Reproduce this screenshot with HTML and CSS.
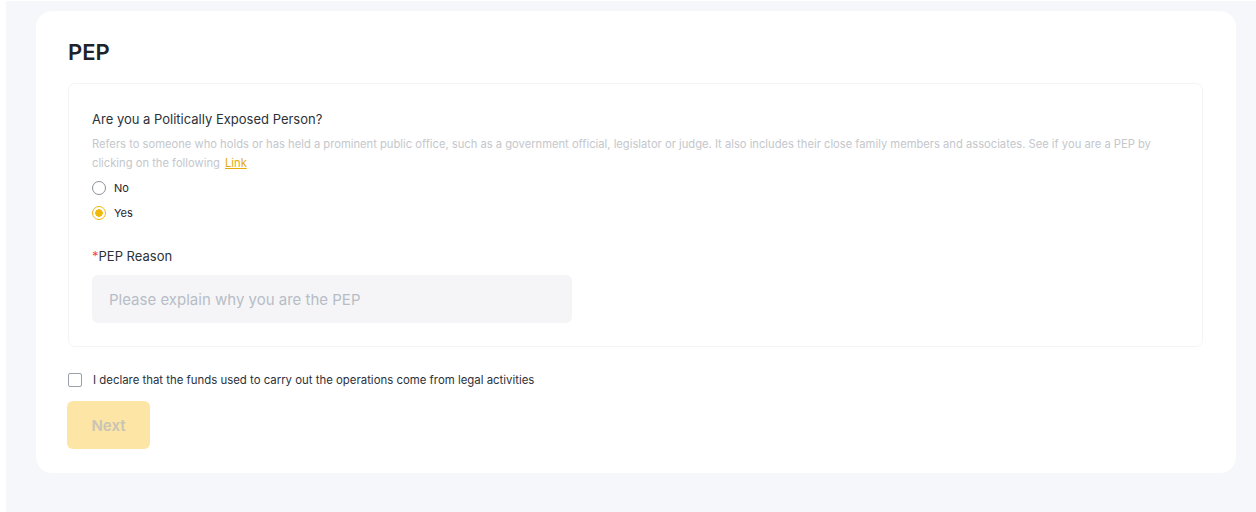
FILE: index.html
```html
<!DOCTYPE html>
<html lang="en">
  <head>
    <meta charset="UTF-8" />
    <meta name="viewport" content="width=device-width, initial-scale=1.0" />
    <title>PEP</title>
    <link rel="stylesheet" href="styles.css">
  </head>
  <body>
    <div class="page">
      <div class="card">
        <h1 class="title">PEP</h1>
        <div class="box">
          <div class="question">Are you a Politically Exposed Person?</div>
          <p class="desc">
            Refers to someone who holds or has held a prominent public office, such as a government official, legislator or judge. It also includes their close family members and associates. See if you are a PEP by clicking on the following <a class="link" href="#">Link</a>
          </p>
          <label class="radio">
            <span class="dot"></span>
            <span>No</span>
          </label>
          <label class="radio">
            <span class="dot checked"></span>
            <span>Yes</span>
          </label>
          <div class="field-label"><span class="star">*</span>PEP Reason</div>
          <div class="input">Please explain why you are the PEP</div>
        </div>
        <label class="declare">
          <span class="check"></span>
          <span>I declare that the funds used to carry out the operations come from legal activities</span>
        </label>
        <button class="next">Next</button>
      </div>
    </div>
  </body>
</html>
```

FILE: styles.css
```css
html {
  height: 100%;
}
body {
  margin: 0;
  height: 100%;
  background-color: #ffffff;
  font-family: Inter, "Noto Sans", sans-serif;
  color: #1e2329;
}
.page {
  margin: 1px 0 0 6px;
  height: 511px;
  padding-top: 10px;
  box-sizing: border-box;
  background-color: #f6f7fa;
}
.card {
  margin-left: 30px;
  width: 1200px;
  height: 462px;
  box-sizing: border-box;
  padding: 29px 0 0 32px;
  border-radius: 16px;
  background-color: #ffffff;
}
.title {
  margin: 0;
  font-size: 22px;
  line-height: 24px;
  font-weight: 600;
}
.box {
  margin-top: 19px;
  width: 1135px;
  height: 264px;
  box-sizing: border-box;
  padding: 27px 23px 0 23px;
  border: 1px solid #f3f4f6;
  border-radius: 7px;
}
.question {
  font-size: 13px;
  line-height: 16px;
  color: #2b3139;
}
.desc {
  margin: 8px 0 0 0;
  max-width: 1082px;
  font-size: 11.2px;
  line-height: 19px;
  color: #c4c7cc;
}
.link {
  display: inline-block;
  line-height: 15px;
  color: #e8a90b;
  margin-left: 2px;
}
.radio {
  display: flex;
  align-items: center;
  gap: 8px;
  height: 25px;
  font-size: 11px;
  color: #1e2329;
}
.radio:first-of-type {
  margin-top: 2px;
}
.dot {
  width: 12px;
  height: 12px;
  border: 1px solid #8a9099;
  border-radius: 50%;
  box-sizing: content-box;
}
.dot.checked {
  border-color: #f0b90b;
  background: radial-gradient(circle, #f0b90b 0 3.5px, #ffffff 4px);
}
.field-label {
  margin-top: 23px;
  font-size: 13px;
  line-height: 16px;
  color: #2b3139;
}
.star {
  color: #f6465d;
}
.input {
  margin-top: 11px;
  width: 480px;
  height: 48px;
  box-sizing: border-box;
  padding-left: 17px;
  display: flex;
  align-items: center;
  border-radius: 6px;
  background-color: #f5f5f7;
  font-size: 15px;
  color: #b7bdc6;
}
.declare {
  margin-top: 26px;
  display: flex;
  align-items: center;
  gap: 11px;
  font-size: 11.4px;
  color: #2b3139;
}
.check {
  width: 12px;
  height: 12px;
  border: 1px solid #9aa0a8;
  border-radius: 2px;
}
.next {
  margin: 14px 0 0 -1px;
  width: 83px;
  height: 48px;
  border: 0;
  border-radius: 6px;
  background-color: #fce5a5;
  font-family: inherit;
  font-size: 15px;
  font-weight: 600;
  color: #c8c4b4;
}
```
